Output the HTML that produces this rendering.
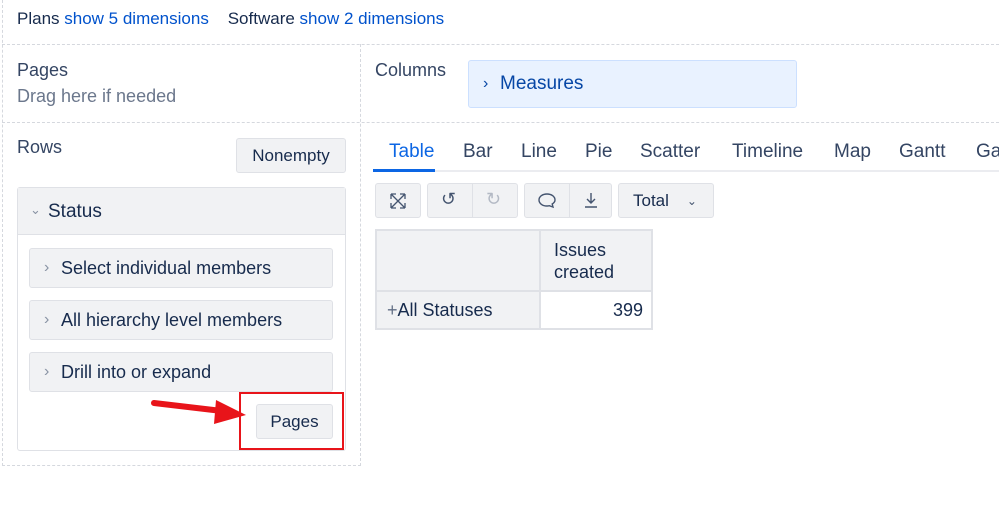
<!DOCTYPE html>
<html><head><style>
*{box-sizing:border-box;margin:0;padding:0}
body{width:999px;height:515px;background:#fff;font-family:"Liberation Sans",sans-serif;color:#172b4d;position:relative;overflow:hidden}
.a{position:absolute;white-space:nowrap}
.blue{color:#0052cc}
.hd{border-top:1px dashed #d5d8de;height:0}
.vd{border-left:1px dashed #d5d8de;width:0}
.btn{position:absolute;background:#f1f2f4;border:1px solid #dfe1e6;border-radius:3px;font-size:17px;display:flex;align-items:center;justify-content:center;color:#172b4d}
.item{position:absolute;left:29px;width:304px;height:40px;background:#f1f2f4;border:1px solid #dfe1e6;border-radius:3px;font-size:18px;padding-left:31px;line-height:38px}
.item:before{content:"›";position:absolute;left:14px;color:#8993a4;font-size:16px}
.tab{position:absolute;top:141px;font-size:19px;color:#344563}
td{border:2px solid #dfe1e6;font-size:18px}
</style></head><body>
<div class="a" style="left:17px;top:9px;font-size:17px">Plans <span class="blue">show 5 dimensions</span>&nbsp;&nbsp;&nbsp;&nbsp;Software <span class="blue">show 2 dimensions</span></div>
<div class="a hd" style="left:2px;top:44px;width:997px"></div>
<div class="a hd" style="left:2px;top:122px;width:997px"></div>
<div class="a hd" style="left:2px;top:465px;width:359px"></div>
<div class="a vd" style="left:2px;top:0;height:466px"></div>
<div class="a vd" style="left:360px;top:44px;height:422px"></div>
<div class="a" style="left:17px;top:60px;font-size:18px;color:#344563">Pages</div>
<div class="a" style="left:17px;top:86px;font-size:18px;color:#6b778c">Drag here if needed</div>
<div class="a" style="left:375px;top:60px;font-size:18px;color:#344563">Columns</div>
<div class="a" style="left:468px;top:60px;width:329px;height:48px;background:#e9f2ff;border:1px solid #cce0ff;border-radius:3px;font-size:19px;color:#0747a6;line-height:46px;padding-left:31px">Measures<span style="position:absolute;left:14px;font-size:16px">›</span></div>
<div class="a" style="left:17px;top:137px;font-size:18px;color:#344563">Rows</div>
<div class="btn" style="left:236px;top:138px;width:110px;height:35px">Nonempty</div>
<div class="a" style="left:17px;top:187px;width:329px;height:264px;border:1px solid #dfe1e6;border-radius:3px"></div>
<div class="a" style="left:18px;top:188px;width:327px;height:47px;background:#f1f2f4;border-bottom:1px solid #dfe1e6;font-size:19px;padding-left:30px;line-height:47px">Status<span style="position:absolute;left:12px;top:-2px;color:#8993a4;font-size:13px">⌄</span></div>
<div class="item" style="top:248px">Select individual members</div>
<div class="item" style="top:300px">All hierarchy level members</div>
<div class="item" style="top:352px">Drill into or expand</div>
<div class="btn" style="left:256px;top:404px;width:77px;height:35px">Pages</div>
<div class="a" style="left:239px;top:392px;width:105px;height:58px;border:2px solid #e8141a"></div>
<svg class="a" style="left:150px;top:396px" width="100" height="30"><path d="M4 7 L72 15" stroke="#e8141a" stroke-width="6" stroke-linecap="round"/><path d="M66 4 L96 19 L64 28 Z" fill="#e8141a"/></svg>
<div class="tab blue" style="left:389px;color:#0c66e4">Table</div>
<div class="tab" style="left:463px">Bar</div>
<div class="tab" style="left:521px">Line</div>
<div class="tab" style="left:585px">Pie</div>
<div class="tab" style="left:640px">Scatter</div>
<div class="tab" style="left:732px">Timeline</div>
<div class="tab" style="left:834px">Map</div>
<div class="tab" style="left:899px">Gantt</div>
<div class="tab" style="left:976px">Ga</div>
<div class="a" style="left:373px;top:170px;width:626px;height:2px;background:#ebecf0"></div>
<div class="a" style="left:373px;top:169px;width:62px;height:3px;background:#0c66e4"></div>
<div class="btn" style="left:375px;top:183px;width:46px;height:35px"></div>
<svg class="a" style="left:389px;top:192px" width="18" height="18"><path d="M2 2l14 14M16 2L2 16M2 2h5M2 2v5M16 2h-5M16 2v5M2 16h5M2 16v-5M16 16h-5M16 16v-5" fill="none" stroke="#44546f" stroke-width="1.3"/></svg>
<div class="btn" style="left:427px;top:183px;width:91px;height:35px"></div>
<div class="a" style="left:472px;top:184px;width:1px;height:33px;background:#dfe1e6"></div>
<div class="a" style="left:441px;top:189px;font-size:18px;color:#44546f">↺</div>
<div class="a" style="left:486px;top:189px;font-size:18px;color:#b3b9c4">↻</div>
<div class="btn" style="left:524px;top:183px;width:88px;height:35px"></div>
<div class="a" style="left:569px;top:184px;width:1px;height:33px;background:#dfe1e6"></div>
<svg class="a" style="left:537px;top:191px" width="20" height="20"><path d="M10 3c-4.5 0-8 2.6-8 6s3.5 6 8 6c.8 0 1.6-.1 2.3-.3L16 16l-.8-3C17 11.9 18 10.5 18 9c0-3.4-3.5-6-8-6z" fill="none" stroke="#44546f" stroke-width="1.4"/></svg>
<svg class="a" style="left:582px;top:191px" width="18" height="20"><path d="M9 2v10M5 8l4 4 4-4M3 16h12" fill="none" stroke="#44546f" stroke-width="1.4"/></svg>
<div class="btn" style="left:618px;top:183px;width:96px;height:35px;justify-content:flex-start;padding-left:14px">Total<span style="margin-left:18px;font-size:12px;color:#44546f">⌄</span></div>
<table class="a" style="left:375px;top:229px;border-collapse:collapse">
<tr><td style="width:164px;height:61px;background:#f1f2f4"></td><td style="width:112px;height:61px;background:#f1f2f4;padding-left:13px;line-height:22px">Issues<br>created</td></tr>
<tr><td style="height:38px;background:#f1f2f4;padding-left:10px"><span style="color:#626f86">+</span>All Statuses</td><td style="text-align:right;padding-right:8px">399</td></tr>
</table>
</body></html>
